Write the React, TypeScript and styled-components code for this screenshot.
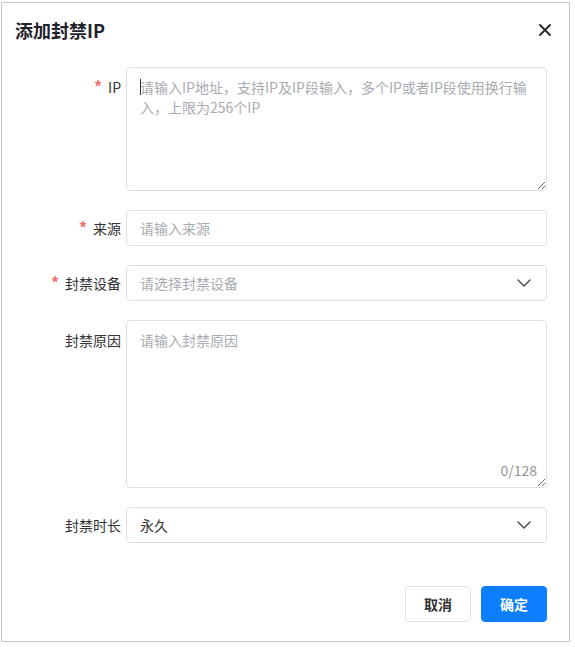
import styled, { createGlobalStyle } from "styled-components";

const GlobalStyle = createGlobalStyle`
  html, body {
    margin: 0;
    padding: 0;
    background: #ffffff;
  }

  body {
    font-family: "Noto Sans CJK SC", "Noto Sans", sans-serif;
    color: #333333;
  }

  * {
    box-sizing: border-box;
  }
`;

const Dialog = styled.div`
  width: 569px;
  height: 640px;
  margin: 2px 0 0 1px;
  border: 1px solid #c8c8c8;
  background: #ffffff;
  display: flex;
  flex-direction: column;
`;

const Header = styled.div`
  display: flex;
  flex-direction: row;
  align-items: center;
  justify-content: space-between;
  padding: 15px 18px 0 13px;
  height: 39px;
`;

const Title = styled.div`
  font-size: 18px;
  line-height: 24px;
  font-weight: 700;
  color: #1f2329;
`;

const CloseButton = styled.button`
  border: none;
  background: none;
  padding: 0;
  width: 12px;
  height: 12px;
  display: flex;
  cursor: pointer;
`;

const Form = styled.div`
  display: flex;
  flex-direction: column;
  gap: 19px;
  margin-top: 25px;
  padding-right: 22px;
`;

const Row = styled.div`
  display: flex;
  flex-direction: row;
  align-items: flex-start;
`;

const Label = styled.div<{ $tall?: boolean }>`
  width: 119px;
  margin-right: 5px;
  flex-shrink: 0;
  text-align: right;
  font-size: 14px;
  color: #333333;
  line-height: ${({ $tall }) => ($tall ? "20px" : "36px")};
  height: ${({ $tall }) => ($tall ? "auto" : "36px")};
  padding-top: ${({ $tall }) => ($tall ? "10px" : "0")};
  white-space: nowrap;
`;

const Star = styled.span`
  color: #f56c6c;
  font-size: 16px;
  line-height: 1;
  font-weight: 700;
  margin-right: 6px;
`;

const Field = styled.div`
  position: relative;
  flex: 1;
  display: flex;
`;

const TextArea = styled.textarea<{ $height: number }>`
  width: 100%;
  height: ${({ $height }) => $height}px;
  border: 1px solid #dcdfe6;
  border-radius: 4px;
  padding: 9px 13px;
  font-family: "Noto Sans CJK SC", "Noto Sans", sans-serif;
  font-size: 14px;
  line-height: 20px;
  color: #333333;
  resize: vertical;
  outline: none;
  background: #ffffff;

  &::placeholder {
    color: #a8abb2;
    opacity: 1;
  }
`;

const Caret = styled.span`
  position: absolute;
  left: 14px;
  top: 12px;
  width: 1px;
  height: 16px;
  background: #333333;
`;

const Counter = styled.span`
  position: absolute;
  right: 10px;
  bottom: 8px;
  font-size: 14px;
  line-height: 20px;
  color: #909399;
`;

const Input = styled.input`
  width: 100%;
  height: 36px;
  border: 1px solid #dcdfe6;
  border-radius: 4px;
  padding: 0 13px;
  font-family: "Noto Sans CJK SC", "Noto Sans", sans-serif;
  font-size: 14px;
  color: #333333;
  outline: none;

  &::placeholder {
    color: #a8abb2;
    opacity: 1;
  }
`;

const Select = styled.div<{ $filled?: boolean }>`
  width: 100%;
  height: 36px;
  border: 1px solid #dcdfe6;
  border-radius: 4px;
  padding: 0 15px 0 13px;
  display: flex;
  flex-direction: row;
  align-items: center;
  justify-content: space-between;
  font-size: 14px;
  color: ${({ $filled }) => ($filled ? "#333333" : "#a8abb2")};
  cursor: pointer;
`;

const Footer = styled.div`
  display: flex;
  flex-direction: row;
  justify-content: flex-end;
  gap: 10px;
  margin-top: 43px;
  padding-right: 22px;
`;

const Button = styled.button<{ $primary?: boolean }>`
  width: 66px;
  height: 36px;
  border-radius: 4px;
  font-family: "Noto Sans CJK SC", "Noto Sans", sans-serif;
  font-size: 14px;
  font-weight: 700;
  cursor: pointer;
  border: 1px solid ${({ $primary }) => ($primary ? "#0b7fff" : "#dcdfe6")};
  background: ${({ $primary }) => ($primary ? "#0b7fff" : "#ffffff")};
  color: ${({ $primary }) => ($primary ? "#ffffff" : "#333333")};
`;

const Chevron = () => (
  <svg width="14" height="8" viewBox="0 0 14 8" fill="none">
    <path
      d="M1 1L7 7L13 1"
      stroke="#555a61"
      strokeWidth="1.6"
      strokeLinecap="round"
      strokeLinejoin="round"
    />
  </svg>
);

const CloseIcon = () => (
  <svg width="12" height="12" viewBox="0 0 12 12" fill="none">
    <path
      d="M1 1L11 11M11 1L1 11"
      stroke="#2b2b2b"
      strokeWidth="1.9"
      strokeLinecap="round"
    />
  </svg>
);

export default function App() {
  return (
    <>
      <GlobalStyle />
      <Dialog>
        <Header>
          <Title>添加封禁IP</Title>
          <CloseButton aria-label="关闭">
            <CloseIcon />
          </CloseButton>
        </Header>

        <Form>
          <Row>
            <Label $tall>
              <Star>*</Star>IP
            </Label>
            <Field>
              <TextArea
                $height={124}
                placeholder="请输入IP地址，支持IP及IP段输入，多个IP或者IP段使用换行输入，上限为256个IP"
              />
              <Caret />
            </Field>
          </Row>

          <Row>
            <Label>
              <Star>*</Star>来源
            </Label>
            <Field>
              <Input placeholder="请输入来源" />
            </Field>
          </Row>

          <Row>
            <Label>
              <Star>*</Star>封禁设备
            </Label>
            <Field>
              <Select>
                <span>请选择封禁设备</span>
                <Chevron />
              </Select>
            </Field>
          </Row>

          <Row>
            <Label $tall>封禁原因</Label>
            <Field>
              <TextArea $height={168} placeholder="请输入封禁原因" />
              <Counter>0/128</Counter>
            </Field>
          </Row>

          <Row>
            <Label>封禁时长</Label>
            <Field>
              <Select $filled>
                <span>永久</span>
                <Chevron />
              </Select>
            </Field>
          </Row>
        </Form>

        <Footer>
          <Button>取消</Button>
          <Button $primary>确定</Button>
        </Footer>
      </Dialog>
    </>
  );
}
